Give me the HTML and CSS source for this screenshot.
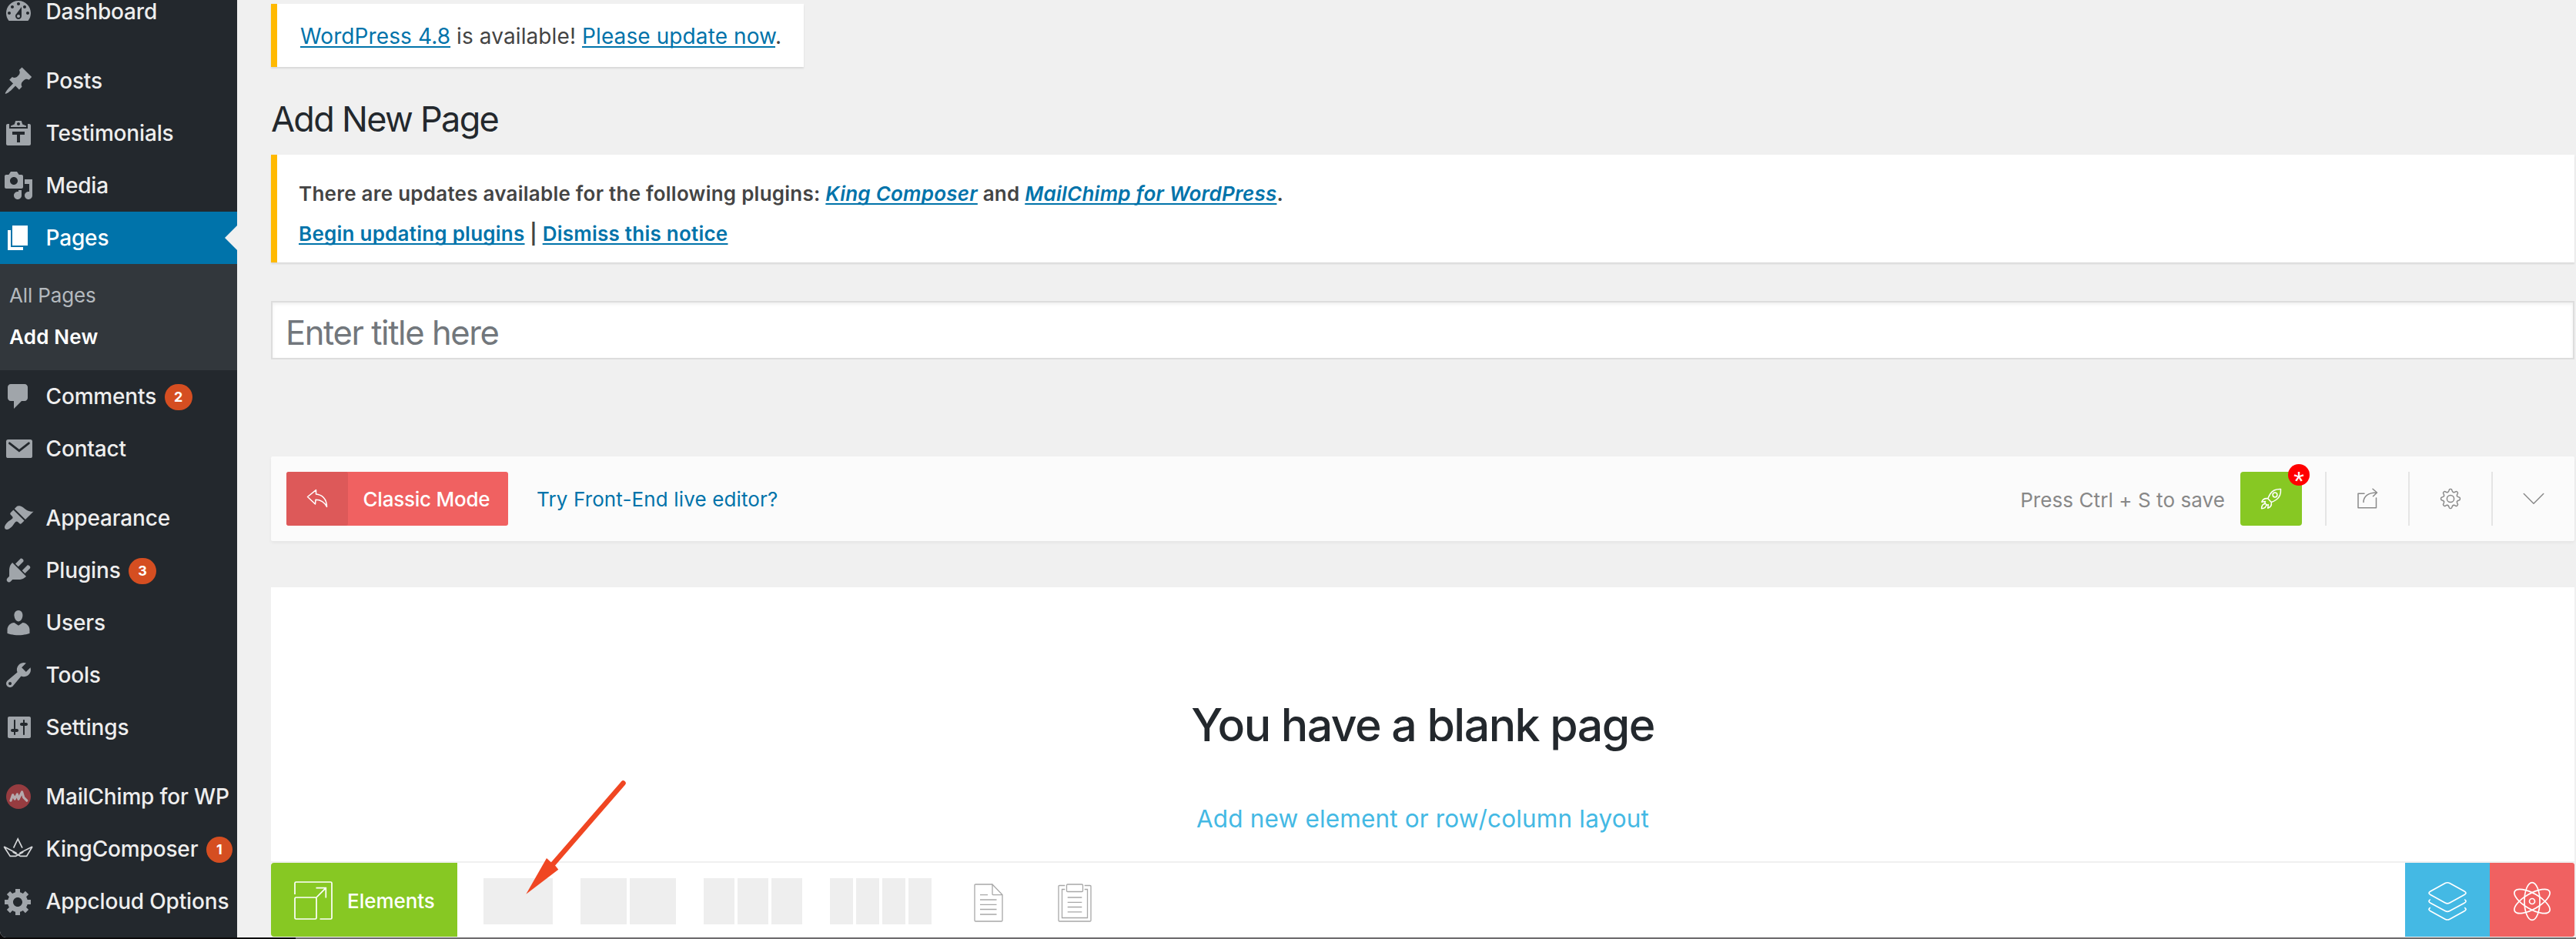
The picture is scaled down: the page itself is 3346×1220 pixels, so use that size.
FILE: index.html
```html
<!DOCTYPE html>
<html lang="en">
<head>
<meta charset="utf-8">
<title>Add New Page</title>
<link rel="stylesheet" href="styles.css">
</head>
<body>
<div class="app">
  <nav class="sidebar">
    <ul class="menu">
      <li class="item"><svg class="glyph" viewBox="0 0 20 20"><path d="M3.76 16h12.48c1.1-1.37 1.76-3.11 1.76-5 0-4.42-3.58-8-8-8s-8 3.58-8 8c0 1.89.66 3.63 1.76 5zM10 4c.55 0 1 .45 1 1s-.45 1-1 1-1-.45-1-1 .45-1 1-1zM6 6c.55 0 1 .45 1 1s-.45 1-1 1-1-.45-1-1 .45-1 1-1zm8 0c.55 0 1 .45 1 1s-.45 1-1 1-1-.45-1-1 .45-1 1-1zm-5.37 5.55L12 7v6c0 1.1-.9 2-2 2s-2-.9-2-2c0-.57.24-1.08.63-1.45zM4 10c.55 0 1 .45 1 1s-.45 1-1 1-1-.45-1-1 .45-1 1-1zm12 0c.55 0 1 .45 1 1s-.45 1-1 1-1-.45-1-1 .45-1 1-1zm-5 3c0-.55-.45-1-1-1s-1 .45-1 1 .45 1 1 1 1-.45 1-1z"/></svg><span>Dashboard</span></li>
      <li class="item group"><svg class="glyph" viewBox="0 0 20 20"><path d="M10.44 3.02l1.82-1.82 6.36 6.35-1.83 1.82c-1.05-.68-2.48-.57-3.41.36l-.75.75c-.92.93-1.04 2.35-.35 3.41l-1.83 1.82-2.41-2.41-2.8 2.79c-.42.42-3.38 2.71-3.8 2.29s1.86-3.39 2.28-3.81l2.79-2.79L4.1 9.36l1.83-1.82c1.05.69 2.48.57 3.4-.36l.75-.75c.93-.92 1.05-2.35.36-3.41z"/></svg><span>Posts</span></li>
      <li class="item"><svg class="glyph" viewBox="0 0 20 20"><path fill-rule="evenodd" d="M4 4H3c-.55 0-1 .45-1 1v12c0 .55.45 1 1 1h14c.55 0 1-.45 1-1V5c0-.55-.45-1-1-1h-1v3H4zM5 6h10V5.200l-2.400-1L11.900 2H8.100L7.400 4.200 5 5.200zM10 3c.55 0 1 .45 1 1s-.45 1-1 1-1-.45-1-1 .45-1 1-1zM6 9h8v2h-3v5H9v-5H6z"/></svg><span>Testimonials</span></li>
      <li class="item"><svg class="glyph" viewBox="0 0 20 20"><path d="M13 11V4c0-.55-.45-1-1-1h-1.670L9 1H5L3.670 3H2c-.55 0-1 .45-1 1v7c0 .55.45 1 1 1h10c.55 0 1-.45 1-1zM7 4.500c1.380 0 2.500 1.120 2.500 2.500S8.380 9.500 7 9.500 4.500 8.380 4.500 7 5.620 4.500 7 4.500zM14 6h5v10.500c0 1.380-1.120 2.500-2.500 2.500S14 17.880 14 16.500s1.120-2.500 2.500-2.500c.17 0 .34.02.5.05V9h-3V6zm-4 8.050V13h2v3.500c0 1.380-1.120 2.500-2.500 2.500S7 17.880 7 16.500 8.120 14 9.500 14c.17 0 .34.02.5.05z"/></svg><span>Media</span></li>
      <li class="item current"><svg class="glyph" viewBox="0 0 20 20"><path d="M6 15V2h10v13H6zm-1 1h8v2H3V5h2v11z"/></svg><span>Pages</span></li>
      <li class="submenu"><span>All Pages</span><strong>Add New</strong></li>
      <li class="item"><svg class="glyph" viewBox="0 0 20 20"><path d="M5 2h9c1.100 0 2 .9 2 2v7c0 1.100-.9 2-2 2h-2l-5 5v-5H5c-1.100 0-2-.9-2-2V4c0-1.100.9-2 2-2z"/></svg><span>Comments</span><b class="count">2</b></li>
      <li class="item"><svg class="glyph" viewBox="0 0 20 20"><rect x="2" y="4" width="17" height="12" rx="1.300"/><path class="cut" d="M4.200 6.400l6.250 4.900 6.250-4.900"/></svg><span>Contact</span></li>
      <li class="item group"><svg class="glyph" viewBox="0 0 20 20"><path d="M14.480 11.060L7.410 3.990l1.500-1.500c.5-.56 2.300-.47 3.510.32 1.210.8 1.430 1.280 2.910 2.100 1.180.64 2.450 1.260 4.450.85zm-.71.71L6.700 4.700 4.930 6.470c-.39.39-.39 1.020 0 1.410l1.060 1.060c.39.39.39 1.030 0 1.420-.6.6-1.430 1.110-2.210 1.690-.35.26-.7.53-1.010.84C1.430 14.230.4 16.080 1.400 17.070c.99 1 2.840-.03 4.180-1.360.31-.31.58-.66.85-1.020.57-.78 1.080-1.610 1.690-2.210.39-.39 1.020-.39 1.410 0l1.060 1.060c.39.39 1.020.39 1.410 0z"/></svg><span>Appearance</span></li>
      <li class="item"><svg class="glyph" viewBox="0 0 20 20"><path d="M13.110 4.360L9.870 7.600 8 5.730l3.240-3.240c.35-.34 1.050-.2 1.560.32.52.51.66 1.210.31 1.550zm-8 1.770l.91-1.120 9.010 9.010-1.190.84c-.71.71-2.630 1.160-3.820 1.160H6.140L4.900 17.260c-.59.59-1.540.59-2.120 0-.59-.58-.59-1.530 0-2.120l1.240-1.240v-3.880c0-1.130.4-3.190 1.090-3.890zm7.260 3.970l3.240-3.240c.34-.35 1.040-.21 1.550.31.52.51.66 1.210.31 1.550l-3.240 3.250z"/></svg><span>Plugins</span><b class="count">3</b></li>
      <li class="item"><svg class="glyph" viewBox="0 0 20 20"><path d="M10 9.250c-2.270 0-2.730-3.440-2.730-3.440C7 4.020 7.820 2 9.970 2c2.160 0 2.980 2.020 2.710 3.810 0 0-.41 3.440-2.680 3.440zm0 2.570L12.720 10c2.390 0 4.520 2.330 4.520 4.530v2.490s-3.650 1.130-7.240 1.130c-3.650 0-7.240-1.130-7.240-1.130v-2.490c0-2.250 1.940-4.480 4.470-4.480z"/></svg><span>Users</span></li>
      <li class="item"><svg class="glyph" viewBox="0 0 20 20"><path d="M16.680 9.770c-1.340 1.340-3.300 1.670-4.950.99l-5.410 6.520c-.99.99-2.590.99-3.580 0s-.99-2.590 0-3.570l6.520-5.420c-.68-1.650-.35-3.610.99-4.950 1.280-1.280 3.120-1.620 4.720-1.060l-2.890 2.890 2.820 2.820 2.860-2.870c.53 1.580.18 3.390-1.080 4.650zM3.810 16.210c.4.39 1.040.39 1.430 0 .4-.4.4-1.040 0-1.430-.39-.4-1.030-.4-1.430 0-.39.39-.39 1.030 0 1.430z"/></svg><span>Tools</span></li>
      <li class="item"><svg class="glyph" viewBox="0 0 20 20"><path d="M18 16V4c0-.55-.45-1-1-1H4c-.55 0-1 .45-1 1v12c0 .55.45 1 1 1h13c.55 0 1-.45 1-1zM8 11h1c.55 0 1 .45 1 1s-.45 1-1 1H8v1.500c0 .28-.22.5-.5.5s-.5-.22-.5-.5V13H6c-.55 0-1-.45-1-1s.45-1 1-1h1V5.500c0-.28.22-.5.5-.5s.5.22.5.5V11zm5-2h-1c-.55 0-1-.45-1-1s.45-1 1-1h1V5.500c0-.28.22-.5.5-.5s.5.22.5.5V7h1c.55 0 1 .45 1 1s-.45 1-1 1h-1v5.500c0 .28-.22.5-.5.5s-.5-.22-.5-.5V9z"/></svg><span>Settings</span></li>
      <li class="item group"><svg class="glyph" viewBox="0 0 20 20"><circle cx="10" cy="10" r="8" fill="#963c40"/><path d="M5 12.600L6.300 8.900l1.300 2.600 1.600-3 .8 3.200 2.300-4.700 1.100 3.600 2 2" fill="none" stroke="#b5aaad" stroke-width="1.600" stroke-linejoin="round" stroke-linecap="round"/></svg><span>MailChimp for WP</span></li>
      <li class="item"><svg class="glyph crown" viewBox="0 0 20 20"><path d="M6.800 9.300L9.600 3.500l2.900 5.800M.6 8.500l4 6.200h3.600l4.900-2.700M.6 8.500l8.200 4.200M19 8.500l-3.700 6.200h-4l-5-2.700M19 8.500l-8.300 4.200"/></svg><span>KingComposer</span><b class="count one">1</b></li>
      <li class="item"><svg class="glyph" viewBox="0 0 20 20"><path d="M18 12h-2.180c-.17.7-.44 1.350-.81 1.930l1.540 1.540-2.100 2.100-1.540-1.540c-.58.36-1.230.63-1.910.79V19H8v-2.180c-.68-.16-1.330-.43-1.910-.79l-1.540 1.540-2.120-2.120 1.540-1.540c-.36-.58-.63-1.230-.79-1.910H1V9.030h2.170c.16-.7.44-1.350.8-1.940L2.430 5.550l2.100-2.100 1.540 1.540c.58-.37 1.240-.64 1.930-.81V2h3v2.180c.68.16 1.330.43 1.910.79l1.540-1.540 2.120 2.120-1.540 1.540c.36.59.64 1.240.8 1.940H18V12zm-8.500 1.500c1.660 0 3-1.340 3-3s-1.340-3-3-3-3 1.340-3 3 1.340 3 3 3z"/></svg><span>Appcloud Options</span></li>
    </ul>
  </nav>

  <main class="content">
    <div class="notice nag"><a>WordPress 4.8</a> is available! <a>Please update now</a>.</div>
    <h1 class="heading">Add New Page</h1>
    <div class="notice plugins">
      <p>There are updates available for the following plugins: <a><em>King Composer</em></a> and <a><em>MailChimp for WordPress</em></a>.</p>
      <p><a>Begin updating plugins</a> | <a>Dismiss this notice</a></p>
    </div>
    <div class="title-field">Enter title here</div>

    <div class="toolbar">
      <div class="classic">
        <span class="classic-icon"><svg width="28" height="26" viewBox="-1 -1 28 26"><path d="M.5 9.500L11.500.6V6C19 6.500 25.500 12 25.500 22.400 22.500 16.500 17 13.200 11 13.200L10.500 19z"/></svg></span>
        <span class="classic-label">Classic Mode</span>
      </div>
      <a class="frontend">Try Front-End live editor?</a>
      <span class="hint">Press Ctrl + S to save</span>
      <div class="save">
        <svg width="28" height="28" viewBox="-1 -1 28 28"><path d="M25.500.5C19 .3 14.500 2.500 12 6.500 10.500 9 9.500 11 8.800 12.700L13.300 17.500C15 17 17.500 15.700 20 14 24 11.300 25.800 7 25.500.5zM8.800 12.700C5 12.300 2 13.600.8 17.300L5.500 16.600 4.800 18.500 7.500 21.300 9.300 20.600 8.700 25.300C12.600 24 13.900 21.500 13.300 17.500M5.300 19.500C1.500 19.800.6 22 .6 25.700 4.300 25.500 6.500 24.500 6.700 21"/><circle cx="18" cy="8" r="2.900"/></svg>
        <span class="dirty">*</span>
      </div>
      <div class="tool"><svg width="28" height="28" viewBox="-1 -1 28 28"><path d="M9 6.300H1V24.800H24.500V12M8 17.500C8 10 14 5 25.300 5M20 .3L25.500 5 20.500 9.700"/></svg></div>
      <div class="tool"><svg width="28" height="28" viewBox="-14 -14 28 28"><defs><path id="tooth" d="M-3.500-8.500Q-2.100-9.300-1.900-11Q-1.700-12.400-.6-12.400H.6Q1.700-12.400 1.900-11Q2.100-9.300 3.500-8.500"/></defs><use href="#tooth"/><use href="#tooth" transform="rotate(45)"/><use href="#tooth" transform="rotate(90)"/><use href="#tooth" transform="rotate(135)"/><use href="#tooth" transform="rotate(180)"/><use href="#tooth" transform="rotate(225)"/><use href="#tooth" transform="rotate(270)"/><use href="#tooth" transform="rotate(315)"/><circle r="4.600"/></svg></div>
      <div class="tool"><svg width="28" height="16" viewBox="-1 -1 28 16"><path d="M.3.500L13 13.200 25.700.5"/></svg></div>
    </div>

    <section class="blank">
      <h2>You have a blank page</h2>
      <p>Add new element or row/column layout</p>
    </section>

    <div class="dock">
      <div class="elements">
        <svg width="50" height="50" viewBox="0 0 50 50"><path d="M1 17V2.500Q1 1 2.500 1H47.500Q49 1 49 2.500V47.500Q49 49 47.500 49H33.500M2.500 21H27.500Q29 21 29 22.500V47.500Q29 49 27.500 49H2.500Q1 49 1 47.500V22.500Q1 21 2.500 21zM29 21L41.300 8.700M28.500 8.700H41.300V21.500"/></svg>
        <span>Elements</span>
      </div>
      <div class="layout one-col"><i></i></div>
      <div class="layout two-col"><i></i><i></i></div>
      <div class="layout three-col"><i></i><i></i><i></i></div>
      <div class="layout four-col"><i></i><i></i><i></i><i></i></div>
      <svg class="doc" width="38" height="50" viewBox="0 0 38 50"><path d="M24 1H2.200Q1 1 1 2.200V47.800Q1 49 2.200 49H35.800Q37 49 37 47.800V14.600L24 1V13.400Q24 14.600 25.200 14.600H37M8 14.600H18M8 21H29.500M8 27.300H29.500M8 33.500H29.500M8 40H29.500"/></svg>
      <svg class="clip" width="44" height="50" viewBox="0 0 44 50"><path d="M9.300 2.500H2.200Q1 2.500 1 3.700V47.800Q1 49 2.200 49H41.800Q43 49 43 47.800V3.700Q43 2.500 41.800 2.500H34.700M9.300 7.500H5.500V44.500H38.500V7.500H34.700M12.700 18H31.300M12.700 24.300H31.300M12.700 30.500H31.300M12.700 36.800H31.300"/><rect x="11.500" y="1" width="21" height="9.500" rx="1.300"/></svg>
      <div class="sections"><svg width="52" height="52" viewBox="-1.500 -1 52 52"><path d="M21.500 1.500Q24.500 0 27.500 1.500L46.500 12Q50.500 14.300 46.500 16.600L27.500 27Q24.500 28.600 21.500 27L2.500 16.600Q-1.500 14.300 2.500 12zM2.300 22.600Q-1.500 25 2.500 27.200L21.500 37.600Q24.500 39.200 27.500 37.600L46.500 27.200Q50.500 25 46.700 22.600M2.300 33.200Q-1.500 35.600 2.500 37.800L21.500 48.200Q24.500 49.800 27.500 48.200L46.500 37.800Q50.500 35.600 46.700 33.200"/></svg></div>
      <div class="atom"><svg width="52" height="52" viewBox="-26 -26 52 52"><ellipse rx="10" ry="24.400"/><ellipse rx="10" ry="26" transform="rotate(60)"/><ellipse rx="10" ry="26" transform="rotate(-60)"/><circle r="3.500"/></svg></div>
    </div>
  </main>
</div>
<div class="edge"></div>
<svg class="pointer" width="136" height="156" viewBox="0 0 136 156"><path class="shaft" d="M129.500 7.500L38 113"/><path class="head" d="M3.300 151.700L30 105 36.500 111 41.500 115 45.300 119.700z"/></svg>
</body>
</html>
```
FILE: styles.css
```css
* { box-sizing: border-box; }

body {
  margin: 0;
  height: 1220px;
  overflow: hidden;
  position: relative;
  display: flex;
  flex-direction: column;
  background: #0b0a0b;
  color: #444;
  font-family: Inter, "Liberation Sans", sans-serif;
}

ul, h1, h2, p { margin: 0; padding: 0; }
svg { display: block; flex: none; }
a { color: #0073aa; }

.app {
  display: flex;
  height: 1218px;
  background: #f0f0f0;
  border-bottom-left-radius: 8px;
  overflow: hidden;
}

/* Admin menu */
.sidebar { flex: none; width: 308px; background: #23282d; }
.menu { list-style: none; margin-top: -19px; }
.item {
  display: flex;
  align-items: center;
  position: relative;
  height: 68px;
  padding-left: 4px;
  color: #eee;
  font-size: 28px;
  font-weight: 450;
  line-height: 28px;
  letter-spacing: -.16px;
  white-space: nowrap;
}
.item.group { margin-top: 22px; }
.item > span { margin-left: 15.500px; }
.glyph { width: 40px; height: 40px; fill: #a0a5aa; }
.glyph .cut { fill: none; stroke: #23282d; stroke-width: 1.400; stroke-linecap: round; }
.glyph.crown path { fill: none; stroke: #d4d6d8; stroke-width: .85; }
.current { background: #0073aa; color: #fff; }
.current .glyph { fill: #fff; }
.current::after {
  content: "";
  position: absolute;
  right: 0;
  top: 18px;
  border: 16px solid transparent;
  border-left: 0;
  border-right-color: #f0f0f0;
}
.submenu {
  display: flex;
  flex-direction: column;
  height: 138px;
  padding: 14px 0 0 12px;
  background: #32373c;
  color: #b4b9be;
  font-size: 26px;
  line-height: 54px;
  letter-spacing: -.15px;
}
.submenu strong { color: #fff; font-weight: 600; letter-spacing: .2px; }
.count {
  display: flex;
  align-items: center;
  justify-content: center;
  width: 36px;
  height: 34px;
  margin: 2px 0 0 10.500px;
  border-radius: 17px;
  background: #d54e21;
  color: #fff;
  font-size: 18px;
  font-weight: 700;
  letter-spacing: 0;
}
.count.one { width: 34px; }

/* Main column */
.content {
  flex: 1;
  display: flex;
  flex-direction: column;
  align-items: stretch;
  padding: 5px 2px 0 44px;
}
.notice {
  background: #fff;
  border-left: 8px solid #ffb900;
  box-shadow: 0 2px 2px rgba(0, 0, 0, .1);
}
.notice a {
  text-decoration: underline;
  text-decoration-thickness: 2px;
  text-underline-offset: 3px;
  text-decoration-skip-ink: none;
}
.nag {
  align-self: flex-start;
  width: 692px;
  height: 82px;
  padding: 1px 0 0 30px;
  font-size: 28px;
  line-height: 82px;
  letter-spacing: .1px;
  white-space: nowrap;
}
.heading {
  height: 114px;
  padding-top: 21px;
  color: #23282d;
  font-size: 45px;
  font-weight: 400;
  line-height: 94px;
  letter-spacing: -1.700px;
}
.plugins {
  height: 140px;
  padding: 25px 0 0 28px;
  font-size: 26px;
  font-weight: 600;
  line-height: 52px;
  letter-spacing: .24px;
}
.title-field {
  height: 76px;
  margin-top: 50px;
  padding: 2px 0 0 17px;
  border: 2px solid #ddd;
  background: #fff;
  box-shadow: inset 0 2px 4px rgba(0, 0, 0, .07);
  color: #72777c;
  font-size: 43.500px;
  line-height: 74px;
  letter-spacing: -1.400px;
}

/* Builder toolbar */
.toolbar {
  display: flex;
  align-items: center;
  height: 110px;
  margin-top: 126px;
  padding-left: 20px;
  background: #fbfbfb;
  border-radius: 2px;
  box-shadow: 0 2px 4px rgba(0, 0, 0, .05);
  font-size: 26px;
  letter-spacing: .13px;
}
.toolbar svg { fill: none; stroke: #8a8a8a; stroke-width: 1.500; stroke-linejoin: round; stroke-linecap: round; }
.classic {
  display: flex;
  align-items: center;
  width: 288px;
  height: 70px;
  border-radius: 3px;
  background: #f06161;
  color: #fff;
  font-weight: 500;
  letter-spacing: -.24px;
  overflow: hidden;
}
.classic-icon {
  display: flex;
  align-items: center;
  justify-content: center;
  width: 80px;
  height: 70px;
  border-radius: 3px;
  background: #dd5959;
}
.toolbar .classic-icon svg, .toolbar .save svg { stroke: #fff; }
.classic-label { margin-left: 19.500px; }
.frontend { margin-left: 37px; }
.hint { margin-left: auto; padding-top: 2px; color: #888; letter-spacing: .08px; }
.save {
  position: relative;
  display: flex;
  align-items: center;
  justify-content: center;
  width: 80px;
  height: 70px;
  margin: 0 30px 0 20px;
  border-radius: 4px;
  background: #87c823;
}
.dirty {
  position: absolute;
  top: -10px;
  right: -10px;
  width: 28px;
  height: 28px;
  border-radius: 50%;
  background: #f00;
  color: #fff;
  font-family: "Liberation Sans", Arial, sans-serif;
  font-size: 35px;
  font-weight: 400;
  line-height: 43px;
  letter-spacing: 0;
  text-align: center;
}
.tool {
  display: flex;
  align-items: center;
  justify-content: center;
  width: 108px;
  height: 70px;
  border-left: 2px solid #e5e5e5;
}

/* Empty canvas */
.blank {
  height: 356px;
  margin-top: 60px;
  padding-top: 129px;
  background: #fff;
  text-align: center;
}
.blank h2 {
  color: #23282d;
  font-size: 59px;
  font-weight: 500;
  line-height: 100px;
  letter-spacing: -1.550px;
}
.blank p {
  margin-top: 42px;
  color: #44b9e4;
  font-size: 31.500px;
  line-height: 60px;
  letter-spacing: .15px;
}

/* Element dock */
.dock {
  display: flex;
  align-items: center;
  height: 98px;
  border-top: 2px solid #f0f0f0;
  background: #fff;
}
.dock svg { fill: none; stroke: #fff; stroke-width: 1.700; }
.elements {
  display: flex;
  align-items: center;
  gap: 19px;
  width: 242px;
  height: 96px;
  margin-right: 34px;
  padding: 2px 0 0 30px;
  border-radius: 4px 0 0 4px;
  background: #87c823;
  color: #fff;
  font-size: 26px;
  font-weight: 500;
  letter-spacing: -.04px;
}
.layout { display: flex; gap: 4px; margin-right: 36px; }
.layout i { width: 40px; height: 60px; margin-top: 4px; background: #eee; }
.one-col i { width: 90px; }
.two-col i { width: 60px; }
.four-col i { width: 30px; }
.dock .doc, .dock .clip { stroke: #a8a8a8; stroke-width: 1.300; margin-top: 8px; }
.doc { margin-left: 19px; }
.clip { margin-left: 71px; }
.sections, .atom {
  display: flex;
  align-items: center;
  justify-content: center;
  width: 110px;
  height: 96px;
  padding-top: 4px;
}
.sections { margin-left: auto; background: #44b9e4; }
.atom { background: #f06161; border-radius: 0 3px 3px 0; }

/* Window edge */
.edge { height: 2px; margin-left: 384px; background: #6e6c6e; }

/* Pointer drawn over the dock */
.pointer { position: absolute; left: 680px; top: 1010px; }
.shaft { fill: none; stroke: #f04622; stroke-width: 6.500; stroke-linecap: round; }
.head { fill: #f04622; }
```
